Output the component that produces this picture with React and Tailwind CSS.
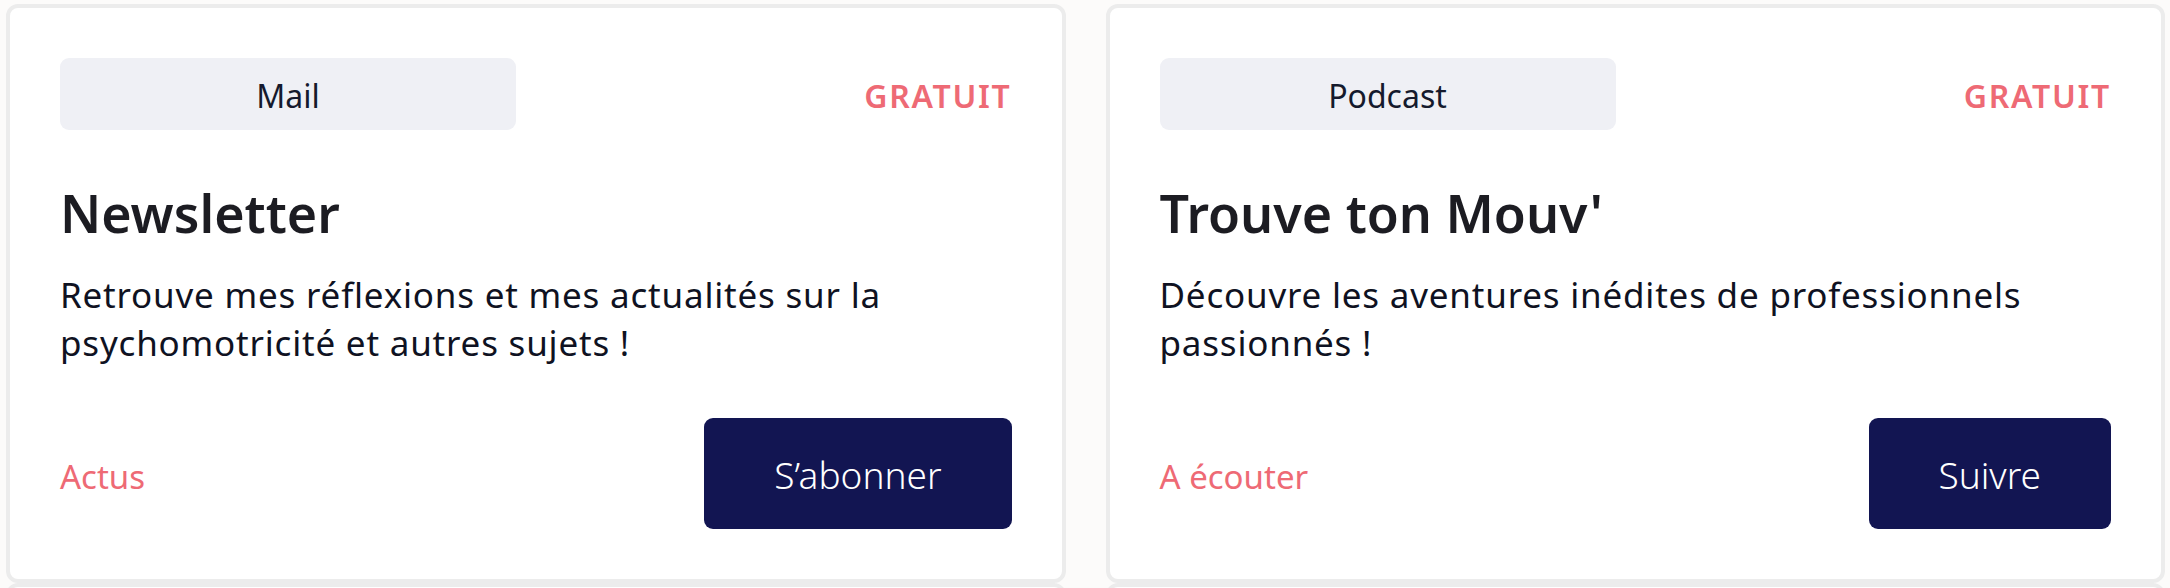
const cards = [
  {
    tag: 'Mail',
    title: 'Newsletter',
    text: 'Retrouve mes réflexions et mes actualités sur la psychomotricité et autres sujets !',
    link: 'Actus',
    cta: 'S’abonner',
  },
  {
    tag: 'Podcast',
    title: "Trouve ton Mouv'",
    text: 'Découvre les aventures inédites de professionnels passionnés !',
    link: 'A écouter',
    cta: 'Suivre',
  },
];

function Card({ item }) {
  return (
    <div className="bg-white border-4 border-[#ececec] rounded-[12px] p-[50px] flex flex-col">
      {/* header */}
      <div className="flex items-center justify-between">
        <div className="w-[456px] h-[72px] rounded-[9px] bg-[#eff0f5] flex items-center justify-center pt-[4px] text-[32px] text-[#151a2d]">
          {item.tag}
        </div>
        <span className="mt-[4px] text-[32px] font-semibold text-[#ee6a75] tracking-[1.7px]">GRATUIT</span>
      </div>

      <h2 className="mt-[52px] text-[52px] leading-[62px] font-semibold text-[#1c1c22]">{item.title}</h2>
      <p className="mt-[27px] text-[35px] leading-[48px] tracking-[0.8px] text-[#0f1222] pr-[30px]">{item.text}</p>

      {/* footer */}
      <div className="mt-[51px] flex items-center justify-between">
        <a className="text-[33px] text-[#ee6a75] mt-[6px]">{item.link}</a>
        <button className="h-[111px] px-[70px] pt-[3px] rounded-[9px] bg-[#121552] text-white text-[37px] font-light">
          {item.cta}
        </button>
      </div>
    </div>
  );
}

export default function App() {
  return (
    <div
      className="min-h-screen w-full bg-[#fcfbfa] pt-[4px] pl-[6px] pr-[5px]"
      style={{ fontFamily: '"Noto Sans", "Open Sans", sans-serif' }}
    >
      <div className="grid grid-cols-2 gap-x-[40px]">
        {[...cards, ...cards].map((c, i) => (
          <Card key={i} item={c} />
        ))}
      </div>
    </div>
  );
}
